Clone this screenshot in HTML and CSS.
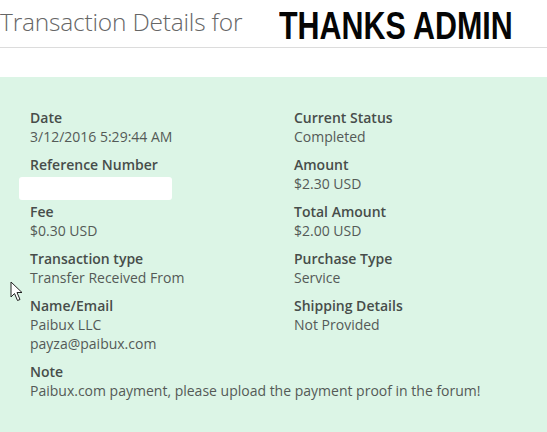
FILE: index.html
```html
<!DOCTYPE html>
<html lang="en">
<head>
  <meta charset="UTF-8" />
  <title>Transaction Details</title>
  <link rel="stylesheet" href="styles.css">
</head>
<body>
  <header class="page-head">
    <h1 class="page-title">Transaction Details for</h1>
    <span class="overlay-text">THANKS ADMIN</span>
  </header>

  <section class="details">
    <div class="details-grid">
      <div class="item">
        <div class="label">Date</div>
        <div class="value">3/12/2016 5:29:44 AM</div>
      </div>
      <div class="item">
        <div class="label">Current Status</div>
        <div class="value">Completed</div>
      </div>
      <div class="item">
        <div class="label">Reference Number</div>
        <div class="value"><span class="redacted"></span></div>
      </div>
      <div class="item">
        <div class="label">Amount</div>
        <div class="value">$2.30 USD</div>
      </div>
      <div class="item">
        <div class="label">Fee</div>
        <div class="value">$0.30 USD</div>
      </div>
      <div class="item">
        <div class="label">Total Amount</div>
        <div class="value">$2.00 USD</div>
      </div>
      <div class="item">
        <div class="label">Transaction type</div>
        <div class="value">Transfer Received From</div>
      </div>
      <div class="item">
        <div class="label">Purchase Type</div>
        <div class="value">Service</div>
      </div>
      <div class="item">
        <div class="label">Name/Email</div>
        <div class="value">Paibux LLC<br>payza@paibux.com</div>
      </div>
      <div class="item">
        <div class="label">Shipping Details</div>
        <div class="value">Not Provided</div>
      </div>
      <div class="item wide">
        <div class="label">Note</div>
        <div class="value">Paibux.com payment, please upload the payment proof in the forum!</div>
      </div>
    </div>

    <!-- mouse pointer caught in the screenshot -->
    <svg class="cursor" width="14" height="21" viewBox="0 0 14 21">
      <path d="M1 1 L1 16 L4.5 12.5 L7.5 19.5 L10 18.5 L7 11.5 L12 11.5 Z" fill="#fff" stroke="#222" stroke-width="1" stroke-linejoin="round" />
    </svg>
  </section>
</body>
</html>
```

FILE: styles.css
```css
* {
  box-sizing: border-box;
}

body {
  margin: 0;
  padding: 0;
  background-color: #ffffff;
  font-family: 'Open Sans', sans-serif;
  min-height: 432px;
}

.page-head {
  display: flex;
  align-items: center;
  height: 48px;
  border-bottom: 1px solid #dcdcdc;
  padding-bottom: 4px;
  overflow: hidden;
  white-space: nowrap;
}

.page-title {
  flex-shrink: 0;
  margin: 0;
  font-size: 24.5px;
  font-weight: 300;
  color: #666;
  letter-spacing: -0.2px;
}

.overlay-text {
  flex-shrink: 0;
  display: inline-block;
  margin-left: 37px;
  margin-top: 8px;
  font-family: 'Liberation Sans', Arial, sans-serif;
  font-weight: bold;
  font-size: 39px;
  line-height: 1;
  color: #050505;
  transform: scaleX(0.78);
  transform-origin: left center;
}

.details {
  position: relative;
  margin-top: 29px;
  background-color: #dcf5e6;
  padding: 31px 30px 40px 30px;
  min-height: 355px;
}

.details-grid {
  display: grid;
  grid-template-columns: 264px 1fr;
  row-gap: 9px;
}

.item.wide {
  grid-column: 1 / 3;
}

.label {
  font-size: 14px;
  line-height: 19px;
  font-weight: 600;
  color: #474d4a;
}

.value {
  font-size: 14px;
  line-height: 19px;
  color: #545a57;
}

.redacted {
  display: block;
  width: 153px;
  height: 23px;
  margin: 3px 0 -7px -11px;
  background: #ffffff;
  border-radius: 3px;
}

.cursor {
  position: absolute;
  left: 10px;
  top: 204px;
}
```
